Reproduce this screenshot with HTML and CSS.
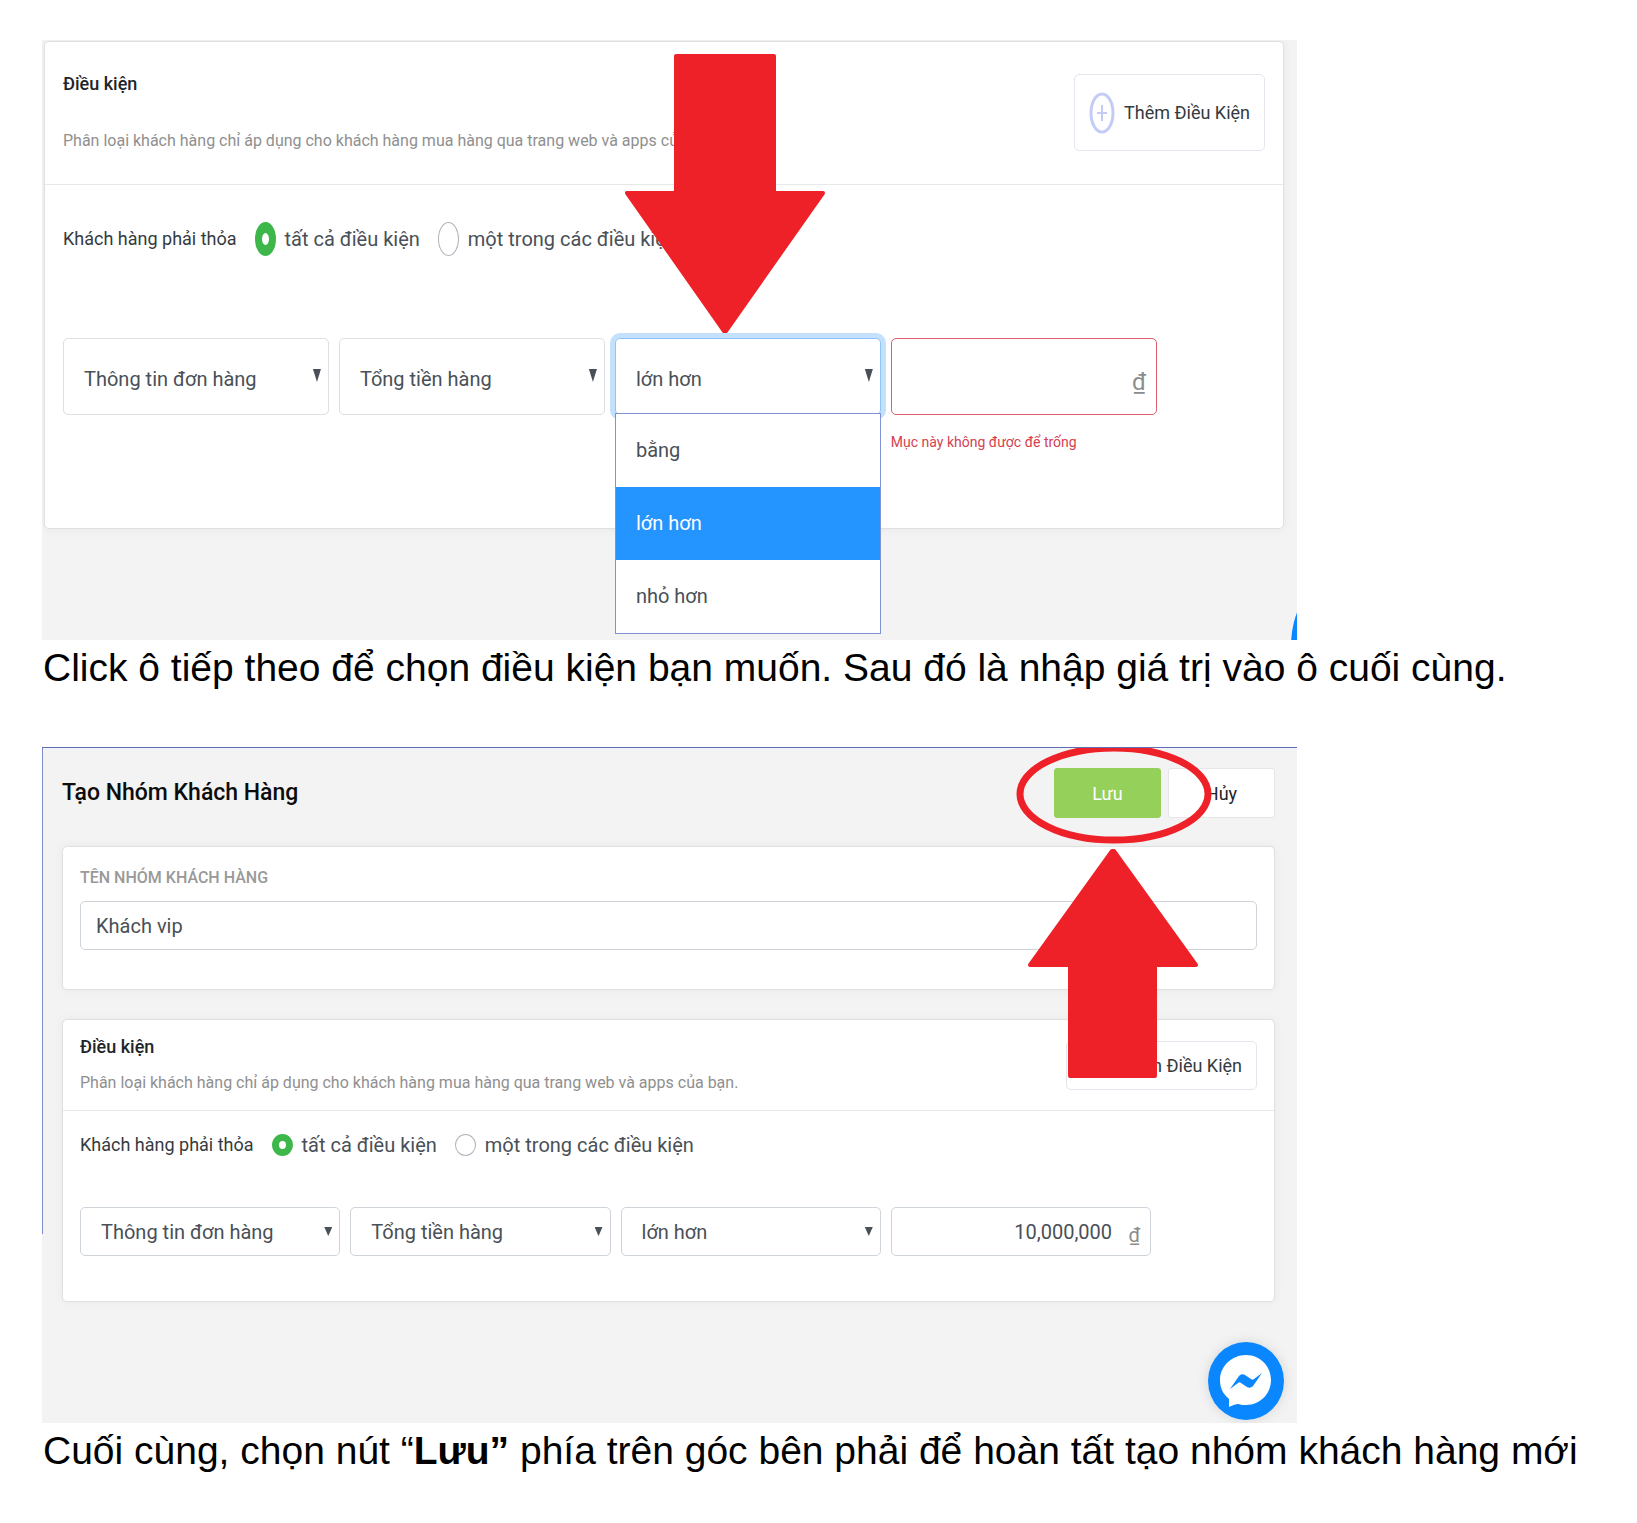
FILE: index.html
```html
<!DOCTYPE html>
<html lang="vi">
<head>
<meta charset="utf-8">
<meta name="viewport" content="width=device-width, initial-scale=1">
<title>Tạo Nhóm Khách Hàng</title>
<link rel="stylesheet" href="styles.css">
</head>
<body>
<main class="guide">
  <figure class="step step-choose">
    <div class="shot shot-tall">
      <section class="card">
        <header class="card-head">
          <div class="card-intro">
            <h2 class="card-title">Điều kiện</h2>
            <p class="card-desc">Phân loại khách hàng chỉ áp dụng cho khách hàng mua hàng qua trang web và apps của bạn.</p>
          </div>
          <button class="add-btn" type="button">
            <svg class="add-icon" viewBox="0 0 26 42" aria-hidden="true"><ellipse cx="13" cy="21" rx="11" ry="19"/><path d="M8 21h10M13 13v16" stroke-width="2"/></svg>
            Thêm Điều Kiện
          </button>
        </header>
        <div class="card-body">
          <div class="match" role="radiogroup" aria-labelledby="match-a">
            <span class="match-label" id="match-a">Khách hàng phải thỏa</span>
            <label class="choice"><input class="radio" type="radio" name="match-a" checked>tất cả điều kiện</label>
            <label class="choice"><input class="radio" type="radio" name="match-a">một trong các điều kiện</label>
          </div>
          <div class="fields">
            <div class="field"><select class="control" aria-label="Loại thông tin"><option>Thông tin đơn hàng</option></select></div>
            <div class="field"><select class="control" aria-label="Tiêu chí"><option>Tổng tiền hàng</option></select></div>
            <div class="field">
              <select class="control is-open" aria-label="Phép so sánh"><option>lớn hơn</option><option>bằng</option><option>nhỏ hơn</option></select>
              <ul class="menu" role="listbox" aria-label="Phép so sánh">
                <li class="menu-item" role="option">bằng</li>
                <li class="menu-item is-selected" role="option" aria-selected="true">lớn hơn</li>
                <li class="menu-item" role="option">nhỏ hơn</li>
              </ul>
            </div>
            <div class="amount">
              <input class="control is-invalid" type="text" aria-label="Giá trị" aria-describedby="amount-error">
              <span class="unit">₫</span>
              <p class="error" id="amount-error">Mục này không được để trống</p>
            </div>
          </div>
        </div>
      </section>
      <svg class="chat-edge" viewBox="0 0 76 124" aria-hidden="true"><ellipse cx="38" cy="62" rx="38" ry="62"/></svg>
      <svg class="mark arrow-down" viewBox="0 0 200 280" aria-hidden="true"><path d="M51 2H149V139H198L101 277H99L2 139H51Z"/></svg>
    </div>
    <figcaption class="caption">Click ô tiếp theo để chọn điều kiện bạn muốn. Sau đó là nhập giá trị vào ô cuối cùng.</figcaption>
  </figure>

  <figure class="step">
    <div class="shot shot-full">
      <header class="page-head">
        <h1 class="page-title">Tạo Nhóm Khách Hàng</h1>
        <div class="actions">
          <button class="btn btn-save" type="button">Lưu</button>
          <button class="btn btn-cancel" type="button">Hủy</button>
        </div>
      </header>
      <section class="card card-name">
        <label class="name-label" for="group-name">TÊN NHÓM KHÁCH HÀNG</label>
        <input class="control name-input" id="group-name" type="text" value="Khách vip">
      </section>
      <section class="card">
        <header class="card-head">
          <div class="card-intro">
            <h2 class="card-title">Điều kiện</h2>
            <p class="card-desc">Phân loại khách hàng chỉ áp dụng cho khách hàng mua hàng qua trang web và apps của bạn.</p>
          </div>
          <button class="add-btn" type="button">
            <svg class="add-icon" viewBox="0 0 26 26" aria-hidden="true"><circle cx="13" cy="13" r="11"/><path d="M8 13h10M13 8v10" stroke-width="2"/></svg>
            Thêm Điều Kiện
          </button>
        </header>
        <div class="card-body">
          <div class="match" role="radiogroup" aria-labelledby="match-b">
            <span class="match-label" id="match-b">Khách hàng phải thỏa</span>
            <label class="choice"><input class="radio" type="radio" name="match-b" checked>tất cả điều kiện</label>
            <label class="choice"><input class="radio" type="radio" name="match-b">một trong các điều kiện</label>
          </div>
          <div class="fields">
            <div class="field"><select class="control" aria-label="Loại thông tin"><option>Thông tin đơn hàng</option></select></div>
            <div class="field"><select class="control" aria-label="Tiêu chí"><option>Tổng tiền hàng</option></select></div>
            <div class="field"><select class="control" aria-label="Phép so sánh"><option>lớn hơn</option></select></div>
            <div class="amount">
              <input class="control" type="text" aria-label="Giá trị" value="10,000,000">
              <span class="unit">₫</span>
            </div>
          </div>
        </div>
      </section>
      <button class="chat" type="button" aria-label="Messenger">
        <svg class="chat-icon" viewBox="0 0 76 78" aria-hidden="true">
          <ellipse cx="38" cy="39" rx="38" ry="39" fill="#0a86ff"/>
          <path fill="#fff" d="M38 13C24 13 12 24 12 38c0 8 3 14 9 19l0 8c4-2 7-3 9-3 3 1 5 1 8 1 14 0 25-11 25-25S52 13 38 13Z"/>
          <path fill="#0a86ff" d="M22 47l9-13c2-2 4-2 6-1l6 4c1 1 2 1 3 0l8-6-9 13c-2 2-4 2-6 1l-6-4c-1-1-2-1-3 0Z"/>
        </svg>
      </button>
      <svg class="mark circle" viewBox="0 0 196 98" aria-hidden="true"><ellipse cx="98" cy="48" rx="94" ry="46"/></svg>
      <svg class="mark arrow-up" viewBox="0 0 172 232" aria-hidden="true"><path d="M85 3H87L169 117H128V228H43V117H3Z"/></svg>
    </div>
    <figcaption class="caption">Cuối cùng, chọn nút “<strong>Lưu”</strong> phía trên góc bên phải để hoàn tất tạo nhóm khách hàng mới</figcaption>
  </figure>
</main>
</body>
</html>
```
FILE: styles.css
```css
* {
  box-sizing: border-box;
}

body {
  margin: 0;
  background: #fff;
  color: #212529;
  font-family: Roboto, "Noto Sans", sans-serif;
}

h1, h2, p, ul, figure {
  margin: 0;
  padding: 0;
}

button, input, select {
  font-family: inherit;
}

.guide {
  display: flex;
  flex-direction: column;
  gap: 51px;
  padding: 40px 42px;
}

.caption {
  padding-left: 1px;
  color: #000;
  font-family: "Liberation Sans", Arial, sans-serif;
  font-size: 39px;
  line-height: 56px;
}

/* Framed views of the admin screen */
.shot {
  position: relative;
  max-width: 1255px;
  overflow: hidden;
  background: #f3f3f3;
}

.shot-tall {
  padding: 1px 13px 111px 2px;
}

.shot-full {
  padding: 20px 22px 121px 20px;
  border-top: 1px solid #5f6fb5;
}

.shot-full::before {
  content: "";
  position: absolute;
  top: 0;
  left: 0;
  width: 1px;
  height: 72%;
  background: #7f8ccb;
}

/* Page header */
.page-head {
  display: flex;
  align-items: center;
  justify-content: space-between;
  margin-bottom: 28px;
}

.page-title {
  color: #0c0c0c;
  font-size: 23px;
  font-weight: 500;
  line-height: 32px;
}

.actions {
  display: flex;
  gap: 7px;
}

.btn {
  width: 107px;
  height: 50px;
  border: 1px solid #e6e6e6;
  border-radius: 3px;
  font-size: 18px;
}

.btn-save {
  border-color: #95d15a;
  background: #95d15a;
  color: #fff;
}

.btn-cancel {
  background: #fff;
  color: #212529;
}

/* Cards */
.card {
  border: 1px solid #e0e0e0;
  border-radius: 5px;
  background: #fff;
  box-shadow: 0 0 8px #e9e9e9;
}

.card-name {
  margin-bottom: 29px;
  padding: 21px 17px 39px;
}

.name-label {
  display: block;
  margin-bottom: 13px;
  color: #999;
  font-size: 16px;
  font-weight: 500;
  line-height: 20px;
}

.card-head {
  display: flex;
  align-items: center;
  justify-content: space-between;
  padding: 15px 17px;
  border-bottom: 1px solid #e8e8e8;
}

.card-intro {
  display: flex;
  flex-direction: column;
  gap: 12px;
}

.card-title {
  font-size: 18px;
  font-weight: 500;
  line-height: 24px;
}

.card-desc {
  color: #8f8f8f;
  font-size: 16px;
  line-height: 24px;
}

.add-btn {
  display: flex;
  flex: none;
  align-items: center;
  gap: 9px;
  height: 49px;
  padding: 0 14px;
  border: 1px solid #e4e6ee;
  border-radius: 5px;
  background: #fff;
  color: #343a40;
  font-size: 18px;
}

.add-icon {
  width: 26px;
  height: 26px;
  fill: none;
  stroke: #c3cbf6;
  stroke-width: 3;
}

.card-body {
  padding: 23px 17px 45px;
}

.match {
  display: flex;
  align-items: center;
  gap: 18px;
  margin-bottom: 51px;
  line-height: 22px;
}

.match-label {
  color: #343a40;
  font-size: 18px;
}

.choice {
  display: flex;
  align-items: center;
  gap: 9px;
  color: #495057;
  font-size: 20px;
}

.radio {
  appearance: none;
  flex: none;
  width: 21px;
  height: 22px;
  margin: 0;
  border: 1px solid #adb5bd;
  border-radius: 50%;
  background: #fff;
}

.radio:checked {
  border: 7px solid #3db64a;
}

.fields {
  display: grid;
  grid-template-columns: repeat(4, 1fr);
  gap: 10px;
  width: 91%;
}

.field,
.amount {
  position: relative;
}

.field::after {
  content: "";
  position: absolute;
  top: 20px;
  right: 8px;
  width: 8px;
  height: 9px;
  background: #495057;
  clip-path: polygon(0 0, 100% 0, 50% 100%);
  pointer-events: none;
}

.control {
  appearance: none;
  display: block;
  width: 100%;
  height: 49px;
  padding: 0 20px;
  border: 1px solid #ced4da;
  border-radius: 5px;
  background: #fff;
  color: #495057;
  font-size: 20px;
}

.name-input {
  padding: 0 15px;
}

.amount .control {
  padding-right: 38px;
  text-align: right;
}

.unit {
  position: absolute;
  top: 14px;
  right: 11px;
  color: #8c8c8c;
  font-size: 20px;
  line-height: 28px;
}

/* Tall view: same form with roomier rows */
.shot-tall .card-head {
  padding: 28px 18px 29px;
}

.shot-tall .card-intro {
  gap: 29px;
}

.shot-tall .card-title,
.shot-tall .card-desc {
  line-height: 28px;
}

.shot-tall .add-btn {
  height: 77px;
}

.shot-tall .add-icon {
  height: 42px;
}

.shot-tall .card-body {
  padding: 37px 18px 72px;
}

.shot-tall .match {
  margin-bottom: 82px;
  line-height: 34px;
}

.shot-tall .radio {
  height: 34px;
}

.shot-tall .radio:checked {
  border-width: 11px 7px;
}

.shot-tall .control {
  height: 77px;
  padding-top: 4px;
  border-color: #dcdfe3;
}

.shot-tall .field::after {
  top: 31px;
  height: 13px;
}

.shot-tall .unit {
  top: 30px;
  font-size: 24px;
}

.shot-tall .control.is-open {
  border-color: #8fc3fb;
  box-shadow: 0 0 0 5px #c3e0fd;
}

.shot-tall .control.is-invalid {
  border-color: #d9606c;
}

.error {
  margin-top: 13px;
  color: #d6404f;
  font-size: 14px;
  line-height: 28px;
  white-space: nowrap;
}

.menu {
  position: absolute;
  z-index: 1;
  top: 75px;
  left: 0;
  right: 0;
  border: 1px solid #7f93d6;
  background: #fff;
  list-style: none;
}

.menu-item {
  padding: 0 20px;
  color: #495057;
  font-size: 20px;
  line-height: 73px;
}

.menu-item.is-selected {
  background: #2495ff;
  color: #fff;
}

/* Chat launcher */
.chat {
  position: absolute;
  right: 13px;
  bottom: 3px;
  width: 76px;
  height: 78px;
  padding: 0;
  border: 0;
  border-radius: 50%;
  background: none;
  box-shadow: 0 0 12px #d4d4d4;
}

.chat-icon {
  display: block;
  width: 76px;
  height: 78px;
}

.chat-edge {
  position: absolute;
  right: -70px;
  bottom: -68px;
  width: 76px;
  height: 124px;
  fill: #0a86ff;
}

/* Red annotations */
.mark {
  position: absolute;
  z-index: 2;
  fill: #ee2129;
  stroke: #ee2129;
  stroke-width: 4;
  stroke-linejoin: round;
  pointer-events: none;
}

.arrow-down {
  top: 14px;
  left: 583px;
  width: 200px;
  height: 280px;
}

.circle {
  top: -2px;
  right: 85px;
  width: 196px;
  height: 98px;
  fill: none;
  stroke-width: 7;
}

.arrow-up {
  top: 100px;
  right: 98px;
  width: 172px;
  height: 232px;
}
```
